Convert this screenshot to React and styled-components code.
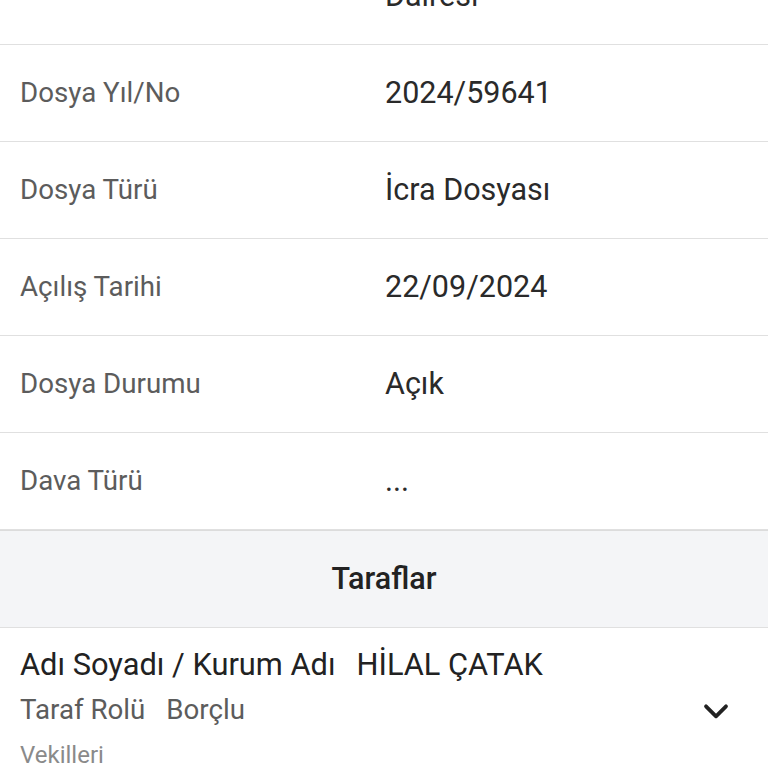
import React from "react";
import styled, { createGlobalStyle } from "styled-components";

const Global = createGlobalStyle`
  html, body { margin: 0; padding: 0; background: #ffffff; overflow: hidden; }
  body { font-family: Roboto, "Noto Sans", "Liberation Sans", sans-serif; }
`;

const Page = styled.div`
  width: 768px;
  height: 768px;
  overflow: hidden;
  background: #fff;
`;

const Scroller = styled.div`
  margin-top: -88px;
`;

const Row = styled.div`
  display: grid;
  grid-template-columns: 50% 50%;
  align-items: center;
  padding: 30px 0;
  border-bottom: 1px solid #e0e0e0;
`;

const Label = styled.div`
  padding-left: 20px;
  font-size: 27.7px;
  line-height: 36px;
  color: #5c5c5c;
`;

const Value = styled.div`
  padding-left: 1px;
  padding-right: 20px;
  font-size: 30.5px;
  line-height: 36px;
  color: #2a2a2a;
`;

const SectionHeader = styled.div`
  background: #f4f5f7;
  border-top: 1px solid #dcdcdc;
  border-bottom: 1px solid #e0e0e0;
  padding: 30px 0 30px;
  text-align: center;
  font-size: 30.5px;
  font-weight: 500;
  line-height: 36px;
  color: #222;
`;

const Party = styled.div`
  display: flex;
  align-items: center;
  padding: 19px 36px 0 20px;
`;

const PartyBody = styled.div`
  flex: 1;
  display: flex;
  flex-direction: column;
`;

const NameLine = styled.div`
  font-size: 30.8px;
  line-height: 36px;
  color: #222;
  display: flex;
  gap: 21px;
`;

const RoleLine = styled.div`
  margin-top: 9px;
  font-size: 27.7px;
  line-height: 36px;
  color: #5c5c5c;
  display: flex;
  gap: 21px;
`;

const SubLabel = styled.div`
  margin-top: 11px;
  font-size: 24px;
  line-height: 32px;
  color: #8a8a8a;
`;

const Chevron = styled.svg`
  flex: none;
  width: 32px;
  height: 32px;
  margin-top: 4px;
`;

const rows = [
  ["İcra Dairesi", "İstanbul 5. Genel İcra Dairesi"],
  ["Dosya Yıl/No", "2024/59641"],
  ["Dosya Türü", "İcra Dosyası"],
  ["Açılış Tarihi", "22/09/2024"],
  ["Dosya Durumu", "Açık"],
  ["Dava Türü", "..."],
];

export default function App() {
  return (
    <Page>
      <Global />
      <Scroller>
        {rows.map(([l, v]) => (
          <Row key={l}>
            <Label>{l}</Label>
            <Value>{v}</Value>
          </Row>
        ))}
        <SectionHeader>Taraflar</SectionHeader>
        <Party>
          <PartyBody>
            <NameLine>
              <span>Adı Soyadı / Kurum Adı</span>
              <span>HİLAL ÇATAK</span>
            </NameLine>
            <RoleLine>
              <span>Taraf Rolü</span>
              <span>Borçlu</span>
            </RoleLine>
            <SubLabel>Vekilleri</SubLabel>
          </PartyBody>
          <Chevron viewBox="0 0 24 24" fill="none">
            <polyline
              points="4.5 8.5 12 16 19.5 8.5"
              stroke="#222"
              strokeWidth="2.8"
              strokeLinecap="round"
              strokeLinejoin="round"
            />
          </Chevron>
        </Party>
      </Scroller>
    </Page>
  );
}
